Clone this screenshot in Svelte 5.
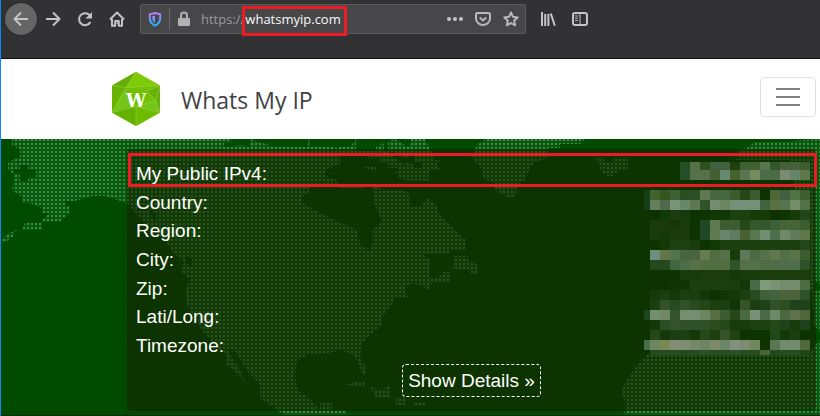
<script>
  const labels = ['My Public IPv4:', 'Country:', 'Region:', 'City:', 'Zip:', 'Lati/Long:', 'Timezone:'];

  // Mosaic over the private values: y, height, then colours from the left edge; '-' is an empty cell.
  const mosaic = [
    [0, 8, '- - - - 244f24 56704a 305020 436040 436040 1f400e 405f32 405f32 5a7650 33562c 486038 486038 3f5c30'],
    [8, 10, '- - - - 244f28 56704a 56704a 446030 668a70 48602c 5a7650 768c60 4c6c48 4c6c48 7c8c70 668468 5e784c'],
    [18, 10, '- - - - - - - - - - - - - - - - -'],
    [28, 10, '14401a 3f642c 365620 3f5f35 284f24 2c5024 607850 456840 456840 3c5c30 264818 3c5c30 0c3300 4c6838 406040 4f7444 3f5f30'],
    [38, 10, '14401a 667e5a 50684c 7a9478 688868 5e7856 30542a 768c70 6c8664 759078 759078 759078 40643c 5a7040 557450 748c68 547048'],
    [48, 10, '- 0f3300 123a06 1c3c10 163b0a 0c3300 0c3300 123706 123706 1c4010 1c4010 153a08 153a08 0c3300 103505 163b08 22461a'],
    [58, 10, '- 1c3b0c 1c3b0c 163808 1c3b0c 0c3300 204824 607850 3c5c32 3c5c32 244818 33582c 33582c 3c6036 456438 456438 3c5c30'],
    [68, 10, '- 1c3b0c 143806 1c3b0c 1c3b0c 0c3300 204824 627a54 67866c 607c60 485f30 5a7850 708e70 4b704c 708a68 607c5c 5e784c'],
    [78, 10, '- - 143806 1e4012 1e4012 183a0c 0c3300 123806 1c400f 1c400f 1c400f 1c400f 1c400f 1c400f 1c400f 1c400f 22461a'],
    [88, 10, '- 6d8e7a 66744a 52744c 486440 486440 667b50 506c40 56704a 183c0c 60785a 4b6a45 57724a 607850 507048 5a7448 3d5c30'],
    [98, 10, '- 25491e 25491e 406640 4f6c48 567048 546e44 546e44 546e44 30522a 56704a 56704a 4f6c44 4f6c44 506c48 506c48 30522a'],
    [108, 10, '- 0e3202 0e3202 0e3202 183b0c 183b0c 1b3c0c 1b3c0c 1b3c0c 143806 183b0c 183b0c 1b3c0c 1b3c0c 1b3c0c 1b3c0c 1b3c0c'],
    [118, 10, '- 0e3202 0e3202 123506 123506 1c3f10 1c3f10 1c3f10 1c3f10 1a3d0e 14380a 4a6a48 809a7c 7c9274 748c6c 748c6c 4d6c44'],
    [128, 10, '- 16380a 1c3e10 16380a 1c3e10 1c3e10 14380a 0e3202 12360a 16380a 1c3e10 284c20 426038 42643c 486438 486438 30502a'],
    [138, 10, '- 1c3f12 32522a 284a20 32522a 284a20 264616 1c3f12 1c3f12 103506 365428 1c3f12 204218 30522a 2c5020 20421a 20421a'],
    [148, 10, '1c4820 768e70 708866 345430 768e70 768e70 6c8662 566e42 3c5c34 264818 4b6a40 789078 4b6848 6c8a68 4c6840 5e724e 506538'],
    [158, 10, '- 143806 2c4e24 33542b 30522a 30522a 30502a 2c4c1c 244818 183b0c 183b0c 1c4210 1c4210 244818 20421a 183b0c 20421a'],
    [168, 10, '- 264618 153808 1c3e10 1c3e10 153808 244818 1c3e10 365428 204210 0c3300 0c3300 0c3300 20481a 143806 1c3e10 0c3300'],
    [178, 10, '48704c 6e8660 7a8858 828f76 7d8d70 758768 6b8462 7d8b68 6c8668 819280 7d8d70 70865c 0c3300 5a7850 6f8c6c 6f8c6c 50683a'],
    [188, 5, '- 264a20 284c22 284c22 264a20 284c22 2f502a 284c22 284c22 2f502a 284c22 284c22 486438 244820 284c22 284c22 22461c']
  ];
  const cells = mosaic.flatMap(([y, h, row]) =>
    row.split(' ').map((c, i) => ({ x: i ? i * 10 - 4 : 0, y, w: i ? 10 : 6, h, c })).filter((d) => d.c !== '-')
  );
</script>

<div class="window">
  <header class="chrome">
    <button class="tool back" aria-label="Back">
      <svg viewBox="0 0 16 16"><path d="M15 8H1.5M8 1.5 1.5 8 8 14.5" /></svg>
    </button>
    <button class="tool" aria-label="Forward">
      <svg viewBox="0 0 16 16"><path d="M1 8h13.5M8 1.5 14.5 8 8 14.5" /></svg>
    </button>
    <button class="tool" aria-label="Reload">
      <svg viewBox="0 0 16 16"><path d="M12.6 4.2A6 6 0 1 0 13.4 11" /><path class="solid" d="M15 1v6.5H8.5z" /></svg>
    </button>
    <button class="tool" aria-label="Home">
      <svg viewBox="0 0 16 16"><path d="M1 8.5 8 1.5l7 7M3 8v6.8h3.2V10h3.6v4.8H13V8" /><path class="solid" d="M7.5 11.5h1.3v1.4H7.5z" /></svg>
    </button>

    <div class="address">
      <svg class="shield" viewBox="0 0 14 16">
        <defs>
          <linearGradient id="shieldInk" x1="0" y1="0" x2="0" y2="1">
            <stop offset="0" stop-color="#b67cf5" /><stop offset="1" stop-color="#20b4ff" />
          </linearGradient>
        </defs>
        <path d="M7 2 12.2 3.2V7c0 3.6-1.7 6-5.2 7.6C3.500 13 1.800 10.600 1.800 7V3.200z" fill="none" stroke="url(#shieldInk)" stroke-width="2" />
        <path d="M7 4.600v7.400C5 10.600 4.300 9 4.300 7V5.200z" fill="url(#shieldInk)" />
      </svg>
      <span class="rule"></span>
      <svg class="lock" viewBox="0 0 12 16">
        <path d="M3 8V4.500a3 3 0 0 1 6 0V8" fill="none" stroke="#b1b1b3" stroke-width="2" />
        <rect y="7" width="12" height="8" rx="1" fill="#b1b1b3" />
      </svg>
      <label for="url">https://</label>
      <div class="domain"><input id="url" value="whatsmyip.com" /></div>
      <button class="mini" aria-label="Page actions">
        <svg viewBox="0 0 16 16"><g class="solid"><circle cx="2" cy="8" r="2" /><circle cx="8" cy="8" r="2" /><circle cx="14" cy="8" r="2" /></g></svg>
      </button>
      <button class="mini" aria-label="Save to Pocket">
        <svg viewBox="0 0 16 16"><path d="M2.500 2h11Q15 2 15 3.500V7.500a7 6.500 0 0 1-14 0v-4Q1 2 2.500 2zM4.800 6.500 8 9.500l3.200-3" /></svg>
      </button>
      <button class="mini" aria-label="Bookmark">
        <svg viewBox="0 0 16 16"><path d="m8 1.500 2 4.300 4.700.6-3.500 3.200.9 4.700L8 12l-4.100 2.300.9-4.700L1.300 6.400 6 5.800z" /></svg>
      </button>
    </div>

    <button class="tool" aria-label="Library">
      <svg viewBox="0 0 16 16"><path d="M2 1v14M5.200 3v12M8.400 3v12" /><path d="m10.800 2.500 4 12.300" /></svg>
    </button>
    <button class="tool" aria-label="Sidebars">
      <svg viewBox="0 0 16 16"><rect x="1" y="2" width="14" height="12" rx="2" /><path class="fine" d="M8 2v12M3 5h3M3 7.300h3M3 9.600h3" /></svg>
    </button>
  </header>

  <nav class="site">
    <a href="#home">
      <svg class="logo" viewBox="0 0 48 54">
        <path fill="#74c004" d="M24 0 48 13.500v27L24 54 0 40.500v-27z" />
        <path fill="#65ad08" d="M24 0 0 13.500l14 2z" />
        <path fill="#80cb08" d="M24 0 14 15.500l34-2z" />
        <path fill="#69b300" d="M0 13.500v27l14-25z" />
        <path fill="#76c51b" d="M0 40.500 14 15.500 18 34z" />
        <path fill="#65b000" d="m0 40.500 24-6V54z" />
        <path fill="#6ebc00" d="M24 34.500 48 40.500 24 54z" />
        <path fill="#76c419" d="m24 34.500 20-6 4 12z" />
        <path fill="#66b008" d="m35 19 13-5.500v27l-4-12z" />
        <path fill="none" stroke="#93d447" stroke-width=".6" d="m24 0-10 15.500 34-2L35 19l9 9.500 4 12-24-6V54M0 13.500l14 2L0 40.500l24-6 20-6 4-15" />
        <text x="24" y="35" text-anchor="middle">W</text>
      </svg>
      <span>Whats My IP</span>
    </a>
    <button class="menu" aria-label="Menu"><i></i><i></i><i></i></button>
  </nav>

  <main>
    <svg class="map" viewBox="0 139 820 277" preserveAspectRatio="xMinYMin slice" aria-hidden="true">
      <defs>
        <pattern id="dots" x="2" y="2" width="4" height="4" patternUnits="userSpaceOnUse">
          <rect width="4" height="4" fill="#09580f" />
          <rect x="1" y="1" width="2" height="2" fill="#3b8d43" />
        </pattern>
      </defs>
      <g fill="url(#dots)">
        <path fill-rule="evenodd" d="M12 139V145L20 150V157L8 162V170L14 174L12 190L22 197V203H30L42 208V213H50L43 219V223H25L22 230L8 233L2 240V242H6L14 236V230H42V222H50L60 222L70 213V206H65V201H75L92 196H105L127 203L135 212L150 228L165 240L172 252L185 262L180 270L190 280L185 290L187 305L200 328L218 348L225 353L227 365L240 376L246 384L240 370L228 350L236 352L245 368L260 385V398L275 408L285 416H350L345 411H332V403H320V410L310 398L297 390L295 375L297 360L310 354H325L340 350L352 354L358 362L362 375H367L366 368L360 358L361 345L370 335L382 325L383 315L392 305L395 298L408 297L405 288L413 283L422 286L428 290L432 283H450V272H443L438 278H430V260L422 255H448L451 250L465 250L466 240L460 235L450 225L440 215L436 205L428 198L420 207H411L408 192L400 190H385L370 184L362 188H340L336 180L325 176V170L340 164V155L352 158L360 166L376 172L382 165L393 171L402 180L428 181L430 170L440 170L433 155L425 139H415L408 147L395 139L372 148L356 139L350 147H310V139L300 147H275L250 139V145H234L230 139ZM310 186L325 184H340L372 187L375 205L382 222L372 230L373 242L370 250L361 246L357 230L350 227L332 219L314 210L303 203V196L309 192ZM390 151L410 160L405 165L390 155Z" />
        <path d="M410 139H420L425 149H415zM428 158L440 163V160H432zM472 157L477 145L486 139H585L580 144H560V148H548V158L535 162L530 168L525 180L518 184L515 197H507L495 190V184L483 178L480 166L475 163zM594 158H604V162H613V158H628V170H618L614 176H606L600 170V164zM455 256H468V260L478 265V274H471V270H462L452 268zM345 384H352L354 381H365V386L382 390L390 385V398H376L370 387H355zM396 397H406V405H396zM413 402H425V405H413zM280 410H340V414L290 415zM735 160L740 150L747 148L755 142H780L820 139V284L814 280V290H808L790 160zM812 290H820V332L814 325zM647 355L640 362L630 375L622 388V393L625 402V412L620 416H820V340L815 345L810 352H650z" />
      </g>
      <path fill="#004b00" d="M20 165h8v4h8v8h-8v4h-8v-8h-6v-4h6zM224 143h10v4h-10zM246 142h4v5h-4zM270 139h12v5h-12zM300 142h8v5h-8zM335 139h4v9h-4zM356 139h20v12h-20zM384 139h4v12h-4zM340 155h28v4h12v4h8v8h-12v-4h-20v4h-16zM384 168h14v4h-14zM365 174h4v8h-4zM392 178h8v12h-8zM408 156h6v6h8v6h-8v-4h-6zM150 210l6 4v8l-4-4zM186 255l6 4v8l-6-4zM430 254h20v18h-18z" />
    </svg>

    <section class="panel">
      <div class="facts">
        <ul>
          {#each labels as label}<li>{label}</li>{/each}
        </ul>
        <svg class="mosaic" viewBox="0 0 166 193" role="img" aria-label="Hidden values" shape-rendering="crispEdges">
          {#each cells as d}
            <rect x={d.x} y={d.y} width={d.w} height={d.h} fill={'#' + d.c} />
          {/each}
        </svg>
      </div>
      <button class="details">Show Details »</button>
      <span class="mark"></span>
    </section>
  </main>
</div>

<style>
  :global(body) { margin: 0; }
  .window {
    display: flex;
    flex-direction: column;
    min-height: 100vh;
    box-sizing: border-box;
    border-left: 1px solid #0a84ff;
    font-family: "Liberation Sans", Arial, sans-serif;
  }
  button { padding: 0; border: 0; background: none; }
  .chrome {
    display: flex;
    align-items: flex-start;
    box-sizing: border-box;
    height: 59px;
    padding: 3px 4px;
    background: #323234;
    border-bottom: 1px solid #0c0c0d;
  }
  .tool, .mini { display: flex; flex: none; align-items: center; justify-content: center; width: 32px; height: 32px; }
  .tool svg, .mini svg { width: 16px; height: 16px; fill: none; stroke: #c4c4c5; stroke-width: 2; stroke-linejoin: round; }
  .tool .solid, .mini .solid { fill: #c4c4c5; stroke: none; }
  .tool .fine { stroke-width: 1; }
  .mini { width: 28px; height: 28px; }
  .mini svg { stroke: #b8b8ba; }
  .back { border-radius: 50%; background: #656565; box-shadow: 0 0 0 1px #29292b; }
  .address {
    display: flex;
    flex: 0 1 386px;
    align-items: center;
    box-sizing: border-box;
    height: 30px;
    margin: 1px 6px 0 7px;
    padding-left: 7px;
    background: #474749;
    border: 1px solid #5c5c5e;
    border-radius: 2px;
    font: 13px/20px "Open Sans", "Noto Sans", sans-serif;
  }
  .address > :global(*) { flex: none; }
  .shield { width: 14px; height: 16px; }
  .rule { width: 1px; height: 22px; margin: 0 8px 0 7px; background: #68686a; }
  .lock { width: 12px; height: 16px; margin-right: 11px; }
  .address label { color: #9a9a9c; }
  .address .domain {
    position: relative;
    flex: 1;
    min-width: 0;
  }
  .domain::after {
    content: "";
    position: absolute;
    top: -3px;
    left: -3px;
    width: 99px;
    height: 24px;
    border: 3px solid #ed1c24;
  }
  .domain input {
    display: block;
    width: 100%;
    padding: 0;
    border: 0;
    outline: 0;
    background: none;
    color: #f9f9fa;
    font: inherit;
  }
  .site {
    display: flex;
    align-items: center;
    justify-content: space-between;
    height: 80px;
    padding: 0 4px 0 111px;
    background: #fff;
  }
  .site a { display: flex; align-items: center; gap: 21px; color: #404244; text-decoration: none; font: 23px/32px "Open Sans", "Noto Sans", sans-serif; }
  .site a span { padding-top: 2px; }
  .logo { width: 48px; height: 54px; }
  .logo text { font: bold 18px "DejaVu Serif", serif; fill: #fff; }
  .menu {
    display: flex;
    flex-direction: column;
    align-items: center;
    justify-content: center;
    gap: 6px;
    box-sizing: border-box;
    width: 56px;
    height: 40px;
    margin-bottom: 4px;
    border: 1px solid #e0e0e0;
    border-radius: 4px;
  }
  .menu i { width: 24px; height: 2px; background: #808080; }
  main {
    position: relative;
    flex: 1;
    padding: 10px 4px 4px 126px;
    border-bottom: 1px solid #092b08;
    background: #004b00;
  }
  .map { position: absolute; top: 0; left: -1px; width: calc(100% + 1px); height: 100%; }
  .panel {
    position: relative;
    display: flex;
    flex-direction: column;
    align-items: center;
    gap: 4px;
    box-sizing: border-box;
    padding: 11px 0 14px;
    border-radius: 4px;
    background: rgba(26, 27, 0, 0.5);
    color: #fff;
    font-size: 19px;
  }
  .facts {
    display: flex;
    align-self: stretch;
    justify-content: space-between;
    padding: 0 6px 0 9px;
  }
  ul { display: grid; grid-auto-rows: 1fr; height: 200px; margin: 0; padding: 0; list-style: none; }
  li { display: flex; align-items: center; line-height: 28px; }
  .mosaic { flex: none; width: 166px; height: 193px; margin-top: 2px; }
  .details {
    box-sizing: border-box;
    height: 33px;
    padding: 0 5px;
    border: 1px dashed #fff;
    border-radius: 4px;
    color: #fff;
    font: 19px/28px "Liberation Sans", Arial, sans-serif;
  }
  .mark { position: absolute; top: 4px; left: 1px; right: -1px; height: 28px; border: 3px solid #ed1c24; }
</style>
